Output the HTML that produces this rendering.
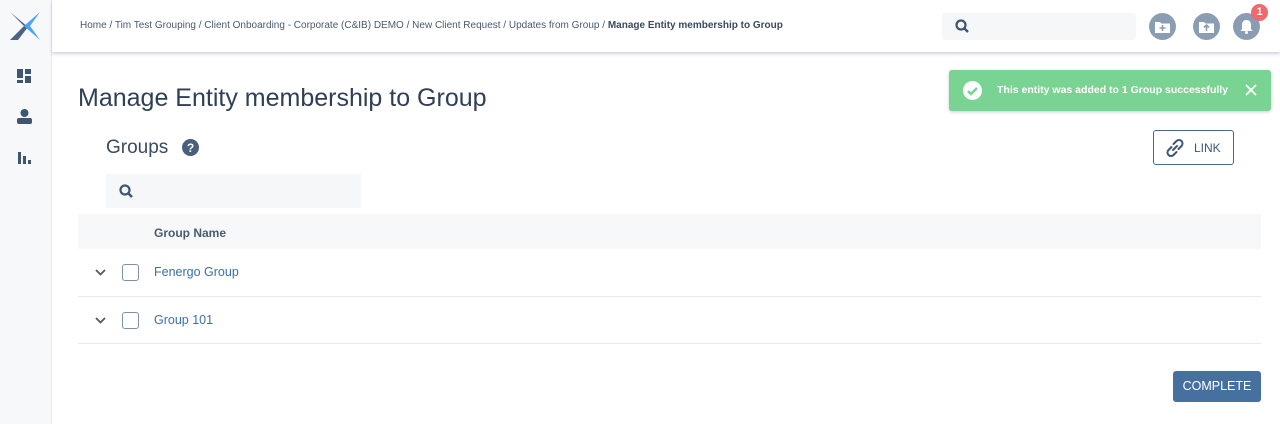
<!DOCTYPE html>
<html><head><style>
*{box-sizing:border-box;margin:0;padding:0}
body{width:1280px;height:424px;background:#fff;font-family:"Liberation Sans",sans-serif;position:relative;overflow:hidden;color:#3a4a5f}
.side{position:absolute;left:0;top:0;width:52px;height:424px;background:#f7f8fa;border-right:1px solid #e6e9ee}
.top{position:absolute;left:52px;top:0;right:0;height:52px;background:#fff;box-shadow:0 2px 3px rgba(60,80,110,.25)}
.bc{position:absolute;left:28px;top:20px;font-size:10px;line-height:12px;color:#4a5a70;white-space:nowrap}
.bc b{color:#3a4a5f}
.search{position:absolute;left:890px;top:13px;width:194px;height:27px;background:#f5f7f9;border-radius:3px}
.circ{position:absolute;top:13px;width:27px;height:27px;border-radius:50%;background:#8b9db3}
.abs{position:absolute}
.toast{position:absolute;left:949px;top:70px;width:322px;height:41px;background:#79d392;border-radius:3px;box-shadow:0 1px 3px rgba(0,0,0,.2);color:#fff;font-weight:bold;font-size:10.5px}
</style></head><body>
<div class="side">
<svg class="abs" style="left:8px;top:10px" width="34" height="32" viewBox="0 0 34 32"><path d="M2 2 L16 16 L2 30 L10 30 L20 17 Z" fill="#4a6484"/><path d="M32 2 L16 16 L32 30 L22 16 Z" fill="#4aa3ff"/></svg>
<svg class="abs" style="left:17px;top:69px" width="15" height="14"><rect x="0" y="0" width="6" height="9" fill="#3e5573"/><rect x="8" y="0" width="6" height="5" fill="#3e5573"/><rect x="8" y="7" width="6" height="7" fill="#3e5573"/><rect x="0" y="11" width="6" height="3" fill="#3e5573"/></svg>
<svg class="abs" style="left:17px;top:109px" width="15" height="15"><circle cx="7.5" cy="4" r="4" fill="#3e5573"/><rect x="0" y="9" width="15" height="6" rx="2" fill="#3e5573"/></svg>
<svg class="abs" style="left:17px;top:150px" width="15" height="14"><rect x="1" y="2" width="3" height="12" fill="#3e5573"/><rect x="6" y="6" width="3" height="8" fill="#3e5573"/><rect x="11" y="10" width="3" height="4" fill="#3e5573"/></svg>
</div>
<div class="top">
<div class="bc">Home / Tim Test Grouping / Client Onboarding - Corporate (C&amp;IB) DEMO / New Client Request / Updates from Group / <b>Manage Entity membership to Group</b></div>
<div class="search"><svg class="abs" style="left:13px;top:6px" width="14" height="14"><circle cx="6" cy="6" r="4.5" stroke="#3e5573" stroke-width="2.2" fill="none"/><path d="M9 9 L13 13" stroke="#3e5573" stroke-width="2.5"/></svg></div>
<div class="circ" style="left:1097px"><svg class="abs" style="left:6px;top:7px" width="15" height="13"><path d="M0 2 h5 l1.5 1.5 h8.5 v9.5 h-15z" fill="#fff"/><path d="M7.5 5 v6 M4.5 8 h6" stroke="#8b9db3" stroke-width="1.6"/></svg></div>
<div class="circ" style="left:1141px"><svg class="abs" style="left:6px;top:7px" width="15" height="13"><path d="M0 2 h5 l1.5 1.5 h8.5 v9.5 h-15z" fill="#fff"/><path d="M7.5 11 v-6 M5 7.5 l2.5-2.5 2.5 2.5" stroke="#8b9db3" stroke-width="1.6" fill="none"/></svg></div>
<div class="circ" style="left:1181px"><svg class="abs" style="left:7px;top:6px" width="13" height="15"><path d="M6.5 1 c-3 0-4.5 2-4.5 5 v4 l-1.5 2 h12 l-1.5-2 v-4 c0-3-1.5-5-4.5-5z" fill="#fff"/><circle cx="6.5" cy="13.5" r="1.5" fill="#fff"/></svg></div>
<div class="abs" style="left:1199px;top:4px;width:17px;height:17px;border-radius:50%;background:#f0696e;color:#fff;font-size:11px;font-weight:bold;text-align:center;line-height:17px">1</div>
</div>
<div class="abs" style="left:78px;top:84px;font-size:25px;color:#2f3f55">Manage Entity membership to Group</div>
<div class="toast"><svg class="abs" style="left:14px;top:11px" width="19" height="19"><circle cx="9.5" cy="9.5" r="9.5" fill="#fff"/><path d="M5 10 l3 3 6-6" stroke="#79d392" stroke-width="2.5" fill="none"/></svg><span class="abs" style="left:48px;top:14px">This entity was added to 1 Group successfully</span><svg class="abs" style="left:296px;top:14px" width="12" height="12"><path d="M1 1 L11 11 M11 1 L1 11" stroke="#fff" stroke-width="1.8"/></svg></div>
<div class="abs" style="left:106px;top:137px;font-size:19px;color:#3a4a5f">Groups</div>
<svg class="abs" style="left:182px;top:139px" width="17" height="17"><circle cx="8.5" cy="8.5" r="8.5" fill="#4a5f7c"/><text x="8.5" y="13" font-size="12" font-weight="bold" fill="#fff" text-anchor="middle" font-family="Liberation Sans">?</text></svg>
<div class="abs" style="left:1153px;top:130px;width:81px;height:35px;border:1.5px solid #4a6a94;border-radius:3px"><svg class="abs" style="left:10px;top:6px" width="22" height="22" viewBox="0 0 22 22"><path d="M9 13 l4-4 M7.5 10 l-3 3 a3.5 3.5 0 0 0 5 5 l3-3 M14.5 12 l3-3 a3.5 3.5 0 0 0-5-5 l-3 3" stroke="#3e5573" stroke-width="2" fill="none" stroke-linecap="round"/></svg><span class="abs" style="left:40px;top:10px;font-size:12px;color:#3e5573">LINK</span></div>
<div class="abs" style="left:106px;top:174px;width:255px;height:34px;background:#f5f7f9"><svg class="abs" style="left:13px;top:10px" width="14" height="14"><circle cx="6" cy="6" r="4.5" stroke="#3e5573" stroke-width="2.2" fill="none"/><path d="M9 9 L13 13" stroke="#3e5573" stroke-width="2.5"/></svg></div>
<div class="abs" style="left:78px;top:214px;width:1183px;height:35px;background:#f7f8fa"></div>
<div class="abs" style="left:154px;top:226px;font-size:12px;font-weight:bold;color:#4a5a70">Group Name</div>
<div class="abs" style="left:78px;top:296px;width:1183px;height:1px;background:#e6e9ee"></div>
<div class="abs" style="left:78px;top:343px;width:1183px;height:1px;background:#e6e9ee"></div>
<svg class="abs" style="left:95px;top:269px" width="11" height="7"><path d="M1 1 l4.5 4.5 4.5-4.5" stroke="#4a5a70" stroke-width="1.8" fill="none"/></svg>
<svg class="abs" style="left:95px;top:317px" width="11" height="7"><path d="M1 1 l4.5 4.5 4.5-4.5" stroke="#4a5a70" stroke-width="1.8" fill="none"/></svg>
<div class="abs" style="left:122px;top:264px;width:17px;height:17px;border:1.5px solid #7f8fa5;border-radius:3px"></div>
<div class="abs" style="left:122px;top:312px;width:17px;height:17px;border:1.5px solid #7f8fa5;border-radius:3px"></div>
<div class="abs" style="left:154px;top:265px;font-size:12.5px;color:#3a6fae">Fenergo Group</div>
<div class="abs" style="left:154px;top:313px;font-size:12.5px;color:#3a6fae">Group 101</div>
<div class="abs" style="left:1173px;top:371px;width:88px;height:31px;background:#46709f;border-radius:3px;color:#fff;font-size:12.5px;text-align:center;line-height:31px">COMPLETE</div>
</body></html>
